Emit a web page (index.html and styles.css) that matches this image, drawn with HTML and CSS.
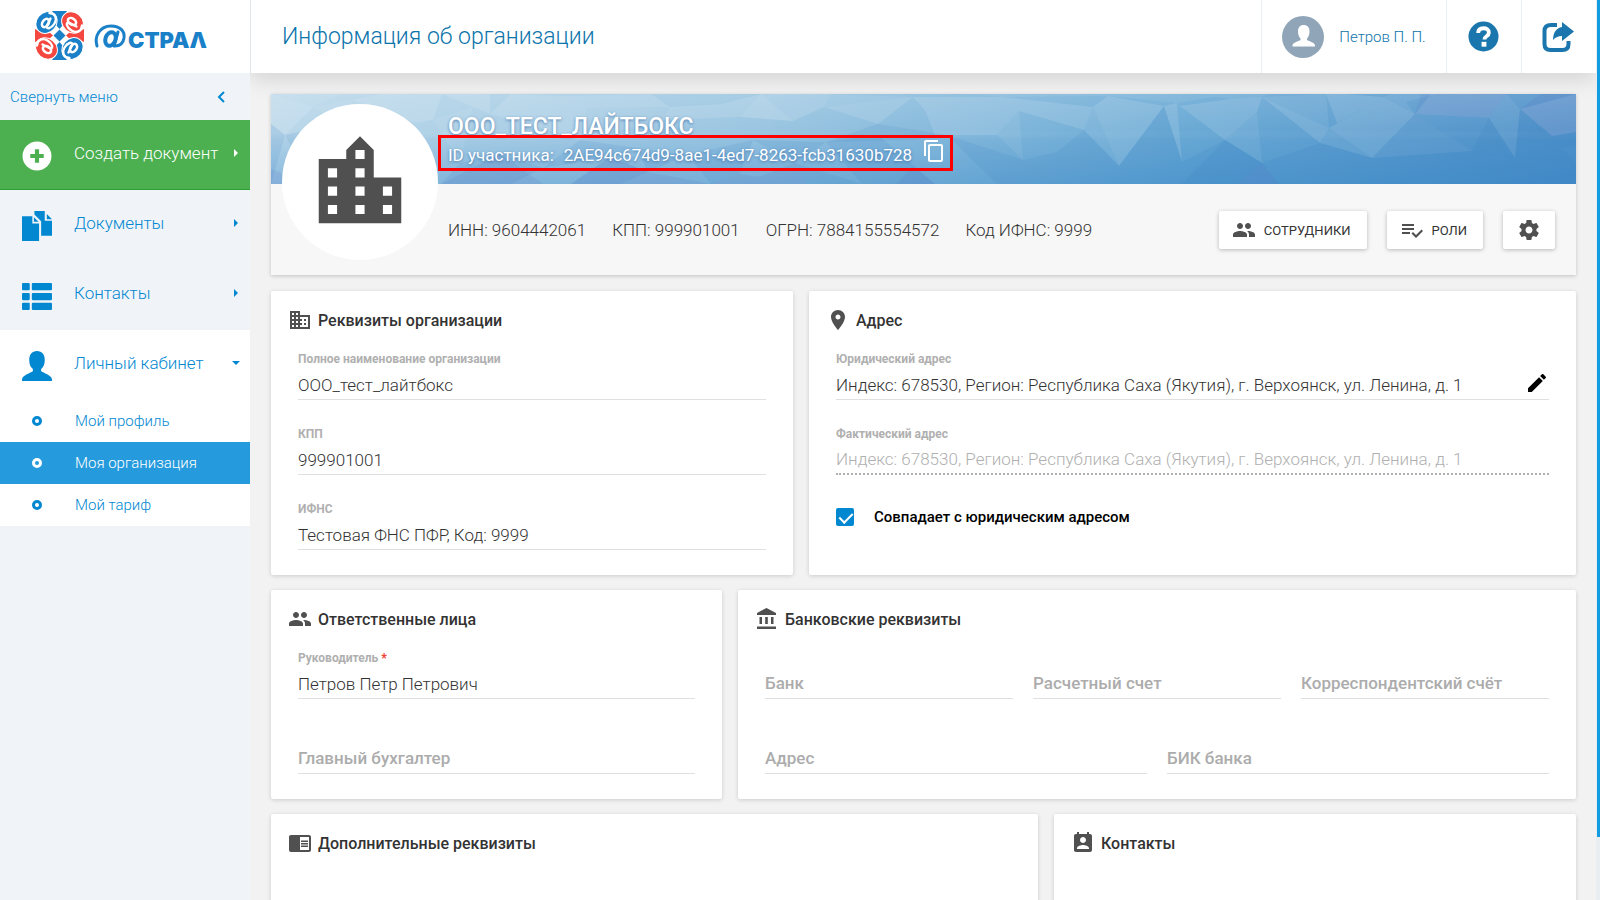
FILE: index.html
```html
<!DOCTYPE html>
<html lang="ru">
<head>
<meta charset="utf-8">
<title>Информация об организации</title>
<link rel="stylesheet" href="styles.css">
</head>
<body>
<div class="app">
  <aside class="sidebar">
    <a class="logo" href="#" aria-label="Астрал">
      <svg class="logo-svg" viewBox="0 0 180 52" role="img" aria-label="@СТРАЛ">
        <defs>
          <g id="swirl">
            <ellipse cx="11.500" cy="11.500" rx="10" ry="11.500" transform="rotate(40 11.500 11.500)"/>
            <ellipse cx="10.500" cy="12" rx="3" ry="4.500" transform="rotate(35 10.500 12)" fill="none" stroke="#fff" stroke-width="2.600"/>
            <path d="M15.500 7.500l-4 8c0 3 5 2 8-3s1-10-5-10.500" fill="none" stroke="#fff" stroke-width="2.400" stroke-linecap="round"/>
          </g>
        </defs>
        <g transform="translate(1 0)">
          <path fill="#1a80c8" d="M17 0h15l-4 6c-1 3-1 6 0 8l-3.500 4-3.500-4c1-3 1-6 0-8zM17 49h15l-4-6c-1-3-1-6 0-8l-3.500-4-3.500 4c1 3 1 6 0 8zM24.500 18.500l6 6-6 6-6-6z"/>
          <path fill="#f4473f" d="M0 18l6 3c3 1 6 1 8 0l4 3.500-4 3.500c-2-1-5-1-8 0l-6 3zM49 18l-6 3c-3 1-6 1-8 0l-4 3.500 4 3.500c2-1 5-1 8 0l6 3z"/>
          <g stroke="#fff" stroke-width="1">
            <use href="#swirl" fill="#1a80c8"/>
            <use href="#swirl" fill="#f4473f" transform="rotate(90 24.500 24.500)"/>
            <use href="#swirl" fill="#1a80c8" transform="rotate(180 24.500 24.500)"/>
            <use href="#swirl" fill="#f4473f" transform="rotate(270 24.500 24.500)"/>
          </g>
        </g>
        <path fill="none" stroke="#1a80c8" stroke-width="3" stroke-linecap="round" d="M63 35c-3-10 3-20 14-20 9 0 14 5 13 12-1 6-5 8-9 8M84 21l-4 14"/>
        <ellipse cx="76.500" cy="28" rx="5" ry="7" transform="rotate(20 76.500 28)" fill="none" stroke="#1a80c8" stroke-width="4"/>
        <text x="94" y="37" class="logo-text">СТРАΛ</text>
      </svg>
    </a>
    <button class="collapse" type="button"><span>Свернуть меню</span>
      <svg width="10" height="14" viewBox="0 0 10 14"><path d="M8 2L3 7l5 5" fill="none" stroke="#0288d1" stroke-width="2"/></svg>
    </button>
    <nav class="menu">
      <a class="item create" href="#">
        <svg class="ico" viewBox="0 0 29 29"><circle cx="14.500" cy="14.500" r="14" fill="#fff"/><path d="M12.500 8h4v4.500h4.500v4h-4.500v4.500h-4v-4.500H8v-4h4.500z" fill="#4caf50"/></svg>
        <span>Создать документ</span><i class="caret"></i>
      </a>
      <a class="item" href="#">
        <svg class="ico" viewBox="0 0 29 29" fill="#0288d1"><path d="M0 5h10v7h6.500v17H0zM11.500 6v4.500h4.500zM12 0h10v9.500h7V24H18.500V10L12 3.500zM24 3v5h5z"/></svg>
        <span>Документы</span><i class="caret"></i>
      </a>
      <a class="item" href="#">
        <svg class="ico" viewBox="0 0 29 29" fill="#0288d1"><rect y="2" width="7.500" height="7" rx="1"/><rect x="9.500" y="2" width="19.500" height="7" rx="1"/><rect y="11.500" width="7.500" height="7" rx="1"/><rect x="9.500" y="11.500" width="19.500" height="7" rx="1"/><rect y="21" width="7.500" height="7" rx="1"/><rect x="9.500" y="21" width="19.500" height="7" rx="1"/></svg>
        <span>Контакты</span><i class="caret"></i>
      </a>
      <div class="group">
        <a class="item" href="#">
          <svg class="ico" viewBox="0 0 29 29" fill="#0288d1"><path d="M14.500 0c5 0 7.500 3.500 7.500 8.500 0 4-1 7-3.500 9v2c3 2 10.500 4 10.500 8V29H0v-1.500c0-4 7.500-6 10.500-8v-2C8 15.500 7 12.500 7 8.500 7 3.500 9.500 0 14.500 0z"/></svg>
          <span>Личный кабинет</span><i class="caret down"></i>
        </a>
        <a class="sub" href="#"><i class="dot"></i>Мой профиль</a>
        <a class="sub active" href="#" aria-current="page"><i class="dot"></i>Моя организация</a>
        <a class="sub" href="#"><i class="dot"></i>Мой тариф</a>
      </div>
    </nav>
  </aside>

  <div class="page">
    <header class="topbar">
      <h1>Информация об организации</h1>
      <a class="user" href="#">
        <svg width="42" height="42" viewBox="0 0 42 42"><circle cx="21" cy="21" r="21" fill="#90a6b8"/><path fill="#fff" d="M21.500 9c4 0 6 2.500 6 6.500 0 3-1 5.500-2.500 7v1.500c2 1.500 8 2.500 8 5.500v1H10.500v-1c0-3 6-4 8-5.500v-1.500c-1.500-1.500-2.500-4-2.500-7 0-4 2-6.500 5.500-6.500z"/></svg>
        <span>Петров П. П.</span>
      </a>
      <button class="tool" type="button" aria-label="Помощь">
        <svg width="31" height="31" viewBox="0 0 32 32"><circle cx="16" cy="16" r="15.500" fill="#1a76ac"/><path d="M10.500 12.500c0-3.500 2.500-5 5.500-5s5.500 1.500 5.500 4.500c0 4-4.500 3.500-4.500 7" fill="none" stroke="#fff" stroke-width="4"/><rect x="14" y="21.500" width="5" height="5" fill="#fff"/></svg>
      </button>
      <button class="tool" type="button" aria-label="Выход">
        <svg width="32" height="32" viewBox="0 0 32 32"><path d="M15 4H9Q2.500 4 2.500 10v13q0 6 6 6h12q6 0 6-6v-3" fill="none" stroke="#1a76ac" stroke-width="4"/><path d="M20 1l12 9.500L20 20v-5c-4 0-6 1-9 4 0-7 3-12 9-13z" fill="#1a76ac"/></svg>
      </button>
    </header>

    <main class="content">
      <section class="hero">
        <svg class="banner" viewBox="0 0 1305 90" preserveAspectRatio="none" aria-hidden="true">
          <defs>
            <linearGradient id="across"><stop offset="0" stop-color="#bbd8ea"/><stop offset=".38" stop-color="#9ac5e1"/><stop offset=".7" stop-color="#6baad5"/><stop offset="1" stop-color="#4f91c9"/></linearGradient>
            <linearGradient id="down" x2="0" y2="1"><stop offset="0" stop-color="#fff" stop-opacity=".12"/><stop offset=".4" stop-color="#fff" stop-opacity="0"/><stop offset=".5" stop-color="#2a80c4" stop-opacity=".08"/><stop offset="1" stop-color="#2a80c4" stop-opacity=".34"/></linearGradient>
          </defs>
          <rect width="1305" height="90" fill="url(#across)"/>
          <rect width="1305" height="90" fill="url(#down)"/>
          <g fill="#fff" fill-opacity=".12">
            <path d="M0 0L42 13 14 41 0 30zM81 6L110 0H171L162 26 144 29zM202 13L171 0H219V20zM292 2L316 14 309 46 266 33zM240 0L292 2 266 33 219 20zM399 13L316 14 292 2 380 0zM451 10L399 13 392 26 469 23z"/>
            <path d="M469 23L451 10 490 0 546 0 553 13 522 27zM553 13L546 0H560zM553 13L642 3 607 30zM642 3L731 3 676 41zM651 9L676 41 664 41zM731 3L748 17 726 41 676 41zM748 17L813 36 822 13 731 3zM837 2L893 12 848 72 822 13z"/>
            <path d="M893 12L906 9 911 68zM906 9L954 46 909 12zM909 12L959 5 991 3 986 18 954 46zM991 3L1058 34 1049 49zM1055 0L1066 29 1112 3 1075 0zM1112 3L1144 20 1101 64 1058 34zM1144 20L1218 24 1235 0 1160 0zM1249 15L1305 0V38L1281 42z"/>
          </g>
          <g fill="#fff" fill-opacity=".07">
            <path d="M42 13L81 6 67 28zM0 0H70L42 13zM162 26L202 13 189 69zM316 14L399 13 392 26 309 46zM490 0L522 27 469 23zM560 0L642 3 553 13zM837 2L906 9 960 0 700 0 731 3zM959 5L991 3 1000 0H920zM991 3L1055 0 1058 34zM1235 0L1249 15 1218 24zM1144 20L1135 8 1165 0H1120L1112 3z"/>
            <path d="M748 17L752 66 726 41zM822 13L848 72 813 36zM954 46L986 18 991 69zM1049 49L1058 34 1101 64zM1218 24L1244 64 1249 15zM1101 64L1144 20 1201 57z"/>
          </g>
          <g fill="#2a75bd" fill-opacity=".11">
            <path d="M0 30L14 41 0 90zM14 41L67 28 40 90zM189 69L229 60 272 74 240 90H170zM309 46L366 54 339 63 272 74zM366 54L416 61 377 78zM339 63L377 78 350 90H300zM416 61L482 46 469 80 440 90zM482 46L555 48 524 69zM524 69L591 90H535zM555 48L607 41 664 90H591z"/>
            <path d="M607 30L676 41 642 46 555 48zM676 41L752 66 726 90zM752 66L786 58 758 90H726zM786 58L848 72 822 90H791zM786 58L791 90H758zM813 36L848 72 786 58zM848 72L869 77 858 90H822zM869 77L911 68 911 90H858zM893 12L911 68 869 77 848 72zM911 68L954 46 991 69 966 90H911z"/>
            <path d="M954 46L991 69 966 90H911zM991 69L1049 49 1101 64 1063 79zM991 69L1008 90H966zM991 69L1063 79 1074 90H1008zM1063 79L1101 64 1074 90zM1101 64L1159 71 1125 90H1074zM1144 20L1201 57 1159 71 1101 64zM1159 71L1177 90H1125zM1201 57L1213 90H1177L1159 71zM1201 57L1218 24 1244 64z"/>
            <path d="M1201 57L1244 64 1257 90H1213zM1244 64L1291 54 1257 90zM1249 15L1281 42 1244 64zM1291 54L1305 70V90H1257zM1281 42L1305 38V52L1291 54 1244 64z"/>
          </g>
          <g fill="#5a62ba" fill-opacity=".12">
            <path d="M0 75L40 90H0zM170 90L229 60 272 90zM300 90L339 63 377 78 440 90zM469 80L535 90H440zM524 69L535 90H469zM1144 20L1218 24 1235 0H1150zM1249 15L1270 0H1305V38L1281 42zM642 72L664 90H625zM991 69L1008 90H966z"/>
          </g>
        </svg>
        <div class="avatar">
          <svg width="110" height="110" viewBox="0 0 24 24" fill="#505050"><path d="M15 11V5l-3-3-3 3v2H3v14h18V11h-6zm-8 8H5v-2h2v2zm0-4H5v-2h2v2zm0-4H5V9h2v2zm6 8h-2v-2h2v2zm0-4h-2v-2h2v2zm0-4h-2V9h2v2zm0-4h-2V5h2v2zm6 12h-2v-2h2v2zm0-4h-2v-2h2v2z"/></svg>
        </div>
        <div class="hero-body">
          <div class="hero-top">
            <h2>ООО_ТЕСТ_ЛАЙТБОКС</h2>
            <div class="idbox"><span>ID участника:</span><span>2AE94c674d9-8ae1-4ed7-8263-fcb31630b728</span>
              <button type="button" class="copy" aria-label="Копировать"><svg width="24" height="24" viewBox="0 0 24 24" fill="#fff"><path d="M16 1H4c-1.100 0-2 .9-2 2v14h2V3h12V1zm3 4H8c-1.100 0-2 .9-2 2v14c0 1.100.9 2 2 2h11c1.100 0 2-.9 2-2V7c0-1.100-.9-2-2-2zm0 16H8V7h11v14z"/></svg></button>
            </div>
          </div>
          <div class="hero-info">
            <span>ИНН: 9604442061</span><span>КПП: 999901001</span><span>ОГРН: 7884155554572</span><span>Код ИФНС: 9999</span>
            <div class="actions">
              <button type="button" class="btn"><svg width="24" height="24" viewBox="0 0 24 24"><path d="M16 11c1.660 0 2.990-1.340 2.990-3S17.660 5 16 5c-1.660 0-3 1.340-3 3s1.340 3 3 3zm-8 0c1.660 0 2.990-1.340 2.990-3S9.660 5 8 5C6.340 5 5 6.340 5 8s1.340 3 3 3zm0 2c-2.330 0-7 1.170-7 3.500V19h14v-2.500c0-2.330-4.670-3.500-7-3.500zm8 0c-.29 0-.62.02-.97.05 1.160.84 1.970 1.970 1.970 3.450V19h6v-2.500c0-2.330-4.670-3.500-7-3.500z"/></svg>СОТРУДНИКИ</button>
              <button type="button" class="btn"><svg width="24" height="24" viewBox="0 0 24 24"><path d="M14 10H2v2h12v-2zm0-4H2v2h12V6zM2 16h8v-2H2v2zm19.500-4.500L23 13l-6.990 7-4.510-4.500L13 14l3.010 3 5.490-5.500z"/></svg>РОЛИ</button>
              <button type="button" class="btn gear" aria-label="Настройки"><svg width="24" height="24" viewBox="0 0 24 24"><path d="M19.430 12.980c.04-.32.07-.64.07-.98s-.03-.66-.07-.98l2.110-1.650c.19-.15.24-.42.12-.64l-2-3.460c-.12-.22-.39-.3-.61-.22l-2.490 1c-.52-.4-1.080-.73-1.690-.98l-.38-2.650C14.460 2.180 14.250 2 14 2h-4c-.25 0-.46.18-.49.42l-.38 2.650c-.61.25-1.170.59-1.690.98l-2.490-1c-.23-.09-.49 0-.61.22l-2 3.460c-.13.22-.07.49.12.64l2.110 1.650c-.04.32-.07.65-.07.98s.03.66.07.98l-2.110 1.650c-.19.15-.24.42-.12.64l2 3.460c.12.22.39.3.61.22l2.490-1c.52.4 1.080.73 1.690.98l.38 2.650c.03.24.24.42.49.42h4c.25 0 .46-.18.49-.42l.38-2.650c.61-.25 1.170-.59 1.690-.98l2.490 1c.23.09.49 0 .61-.22l2-3.460c.12-.22.07-.49-.12-.64l-2.110-1.650zM12 15.500c-1.930 0-3.500-1.570-3.500-3.500s1.570-3.500 3.500-3.500 3.500 1.570 3.500 3.500-1.570 3.500-3.500 3.500z"/></svg></button>
            </div>
          </div>
        </div>
      </section>

      <div class="row row-a">
        <section class="card">
          <h3><svg width="24" height="24" viewBox="0 0 24 24"><path d="M12 7V3H2v18h20V7H12zM6 19H4v-2h2v2zm0-4H4v-2h2v2zm0-4H4V9h2v2zm0-4H4V5h2v2zm4 12H8v-2h2v2zm0-4H8v-2h2v2zm0-4H8V9h2v2zm0-4H8V5h2v2zm10 12h-8v-2h2v-2h-2v-2h2v-2h-2V9h8v10zm-2-8h-2v2h2v-2zm0 4h-2v2h2v-2z"/></svg>Реквизиты организации</h3>
          <div class="fields">
            <div class="field"><label for="full">Полное наименование организации</label><input id="full" value="ООО_тест_лайтбокс"></div>
            <div class="field"><label for="kpp">КПП</label><input id="kpp" value="999901001"></div>
            <div class="field"><label for="ifns">ИФНС</label><input id="ifns" value="Тестовая ФНС ПФР, Код: 9999"></div>
          </div>
        </section>
        <section class="card">
          <h3><svg width="24" height="24" viewBox="0 0 24 24"><path d="M12 2C8.130 2 5 5.130 5 9c0 5.250 7 13 7 13s7-7.750 7-13c0-3.870-3.130-7-7-7zm0 9.500c-1.380 0-2.500-1.120-2.500-2.500s1.120-2.500 2.500-2.500 2.500 1.120 2.500 2.500-1.120 2.500-2.500 2.500z"/></svg>Адрес</h3>
          <div class="fields">
            <div class="field"><label for="legal">Юридический адрес</label>
              <div class="with-edit"><input id="legal" value="Индекс: 678530, Регион: Республика Саха (Якутия), г. Верхоянск, ул. Ленина, д. 1"><button type="button" class="edit" aria-label="Изменить"><svg width="24" height="24" viewBox="0 0 24 24"><path d="M3 17.250V21h3.750L17.810 9.940l-3.750-3.750L3 17.250zM20.710 7.040c.39-.39.39-1.020 0-1.410l-2.340-2.340c-.39-.39-1.020-.39-1.410 0l-1.830 1.830 3.750 3.750 1.830-1.830z"/></svg></button></div></div>
            <div class="field"><label for="fact">Фактический адрес</label><input id="fact" disabled value="Индекс: 678530, Регион: Республика Саха (Якутия), г. Верхоянск, ул. Ленина, д. 1"></div>
            <label class="check"><input type="checkbox" checked><span>Совпадает с юридическим адресом</span></label>
          </div>
        </section>
      </div>

      <div class="row row-b">
        <section class="card">
          <h3><svg width="24" height="24" viewBox="0 0 24 24"><path d="M16 11c1.660 0 2.990-1.340 2.990-3S17.660 5 16 5c-1.660 0-3 1.340-3 3s1.340 3 3 3zm-8 0c1.660 0 2.990-1.340 2.990-3S9.660 5 8 5C6.340 5 5 6.340 5 8s1.340 3 3 3zm0 2c-2.330 0-7 1.170-7 3.500V19h14v-2.500c0-2.330-4.670-3.500-7-3.500zm8 0c-.29 0-.62.02-.97.05 1.160.84 1.970 1.970 1.970 3.450V19h6v-2.500c0-2.330-4.670-3.500-7-3.500z"/></svg>Ответственные лица</h3>
          <div class="fields">
            <div class="field"><label for="head">Руководитель <b>*</b></label><input id="head" value="Петров Петр Петрович"></div>
            <div class="field empty"><input aria-label="Главный бухгалтер" placeholder="Главный бухгалтер"></div>
          </div>
        </section>
        <section class="card">
          <h3><svg width="24" height="24" viewBox="0 0 24 24"><path d="M4.500 10v7H7v-7H4.500zm5.700 0v7h2.600v-7h-2.600zM2 22h19v-2.500H2V22zm14-12v7h2.500v-7H16zm-4.500-9L2 6v2h19V6l-9.500-5z"/></svg>Банковские реквизиты</h3>
          <div class="fields">
            <div class="line">
              <div class="field empty"><input aria-label="Банк" placeholder="Банк"></div>
              <div class="field empty"><input aria-label="Расчетный счет" placeholder="Расчетный счет"></div>
              <div class="field empty"><input aria-label="Корреспондентский счёт" placeholder="Корреспондентский счёт"></div>
            </div>
            <div class="line">
              <div class="field empty"><input aria-label="Адрес" placeholder="Адрес"></div>
              <div class="field empty"><input aria-label="БИК банка" placeholder="БИК банка"></div>
            </div>
          </div>
        </section>
      </div>

      <div class="row row-c">
        <section class="card tall">
          <h3><svg width="24" height="24" viewBox="0 0 24 24"><path d="M13 12h7v1.500h-7zm0-2.500h7V11h-7zm0 5h7V16h-7zM21 4H3c-1.100 0-2 .9-2 2v13c0 1.100.9 2 2 2h18c1.100 0 2-.9 2-2V6c0-1.100-.9-2-2-2zm0 15h-9V6h9v13z"/></svg>Дополнительные реквизиты</h3>
        </section>
        <section class="card tall">
          <h3><svg width="24" height="24" viewBox="0 0 24 24"><path d="M19 3h-1V1h-2v2H8V1H6v2H5c-1.110 0-2 .9-2 2v14c0 1.100.89 2 2 2h14c1.100 0 2-.9 2-2V5c0-1.100-.9-2-2-2zm-7 3c1.660 0 3 1.340 3 3s-1.340 3-3 3-3-1.340-3-3 1.340-3 3-3zm6 12H6v-1c0-2 4-3.100 6-3.100s6 1.100 6 3.100v1z"/></svg>Контакты</h3>
        </section>
      </div>
    </main>
  </div>
  <div class="track"><div class="thumb"></div></div>
</div>
</body>
</html>
```
FILE: styles.css
```css
* { box-sizing: border-box; }
body { margin: 0; font-family: Roboto, "Noto Sans", sans-serif; font-size: 17px; font-weight: 300; color: #333; background: #f2f2f2; }
button { font: inherit; border: 0; background: none; padding: 0; color: inherit; }
a { color: inherit; text-decoration: none; }
h1, h2, h3 { margin: 0; }
svg { display: block; flex: none; }

.app { display: flex; height: 100vh; overflow: hidden; }
.sidebar { flex: 0 0 250px; background: #f0f4f8; color: #0288d1; }
.logo { display: flex; align-items: center; height: 73px; padding: 0 34px; background: #fff; }
.logo-svg { width: 180px; height: 52px; }
.logo-text { font: 900 22px Inter, sans-serif; fill: #1a80c8; }
.collapse { display: flex; align-items: center; justify-content: space-between; width: 100%; height: 47px; padding: 0 24px 0 10px; font-size: 15px; }
.item { display: flex; align-items: center; height: 70px; padding: 0 10px 0 22px; }
.item span { flex: 1; padding-bottom: 4px; }
.ico { width: 30px; height: 30px; margin: 2px 22px 0 0; }
.create { background: #4caf50; color: #fff; border-bottom: 1px solid #2fa035; }
.caret { border: 4px solid transparent; border-left-color: currentColor; border-right: 0; margin: 0 2px 4px 0; }
.caret.down { border: 4px solid transparent; border-top-color: currentColor; border-bottom: 0; margin-right: 0; }
.group { background: #fff; }
.sub { display: flex; align-items: center; height: 42px; padding-left: 32px; font-size: 15px; }
.dot { width: 10px; height: 10px; margin-right: 33px; border: 3px solid #0288d1; border-radius: 50%; }
.active { background: #259adc; color: #fff; }
.active .dot { border-color: #fff; }

.page { flex: 1; min-width: 0; display: flex; flex-direction: column; }
.topbar { position: relative; display: flex; flex: 0 0 73px; background: #fff; border-left: 1px solid #e0e6ea; box-shadow: 0 4px 22px rgba(0,0,0,.15); clip-path: inset(0 0 -40px 0); color: #0b74ab; }
h1 { flex: 1; align-self: center; padding-left: 31px; font-size: 23px; font-weight: 300; }
.user, .tool { display: flex; align-items: center; justify-content: center; border-left: 1px solid #e8eef3; }
.user { width: 185px; gap: 15px; font-size: 15px; }
.tool { width: 75px; padding-right: 2px; }

.content { flex: 1; min-height: 0; overflow: hidden; padding: 21px 20px 0 21px; }
.hero { position: relative; display: flex; margin-bottom: 16px; background: #f7f7f7; box-shadow: 0 1px 4px rgba(0,0,0,.2); }
.banner { position: absolute; top: 0; left: 0; width: 100%; height: 90px; }
.avatar { position: relative; display: flex; align-items: center; justify-content: center; flex: 0 0 156px; height: 156px; margin: 10px 10px 14px 11px; border-radius: 50%; background: #fff; }
.hero-body { position: relative; flex: 1; }
.hero-top { height: 90px; padding-top: 20px; color: #fff; text-shadow: 0 1px 3px rgba(40,90,150,.7); }
h2 { font-size: 23px; line-height: 26px; font-weight: 500; }
.idbox { position: absolute; top: 41px; left: -10px; display: flex; align-items: center; gap: 10px; height: 36px; padding: 4px 4px 0 7px; border: 3px solid #f00; font-weight: 400; }
.copy { padding-bottom: 8px; }
.hero-info { display: flex; align-items: center; gap: 26px; height: 91px; padding: 1px 21px 0 0; }
.actions { display: flex; gap: 20px; margin-left: auto; }
.btn { display: flex; align-items: center; gap: 8px; height: 38px; padding: 0 16px 0 13px; border-radius: 2px; background: #fff; box-shadow: 0 1px 4px rgba(0,0,0,.26); font-size: 13px; font-weight: 400; fill: #505050; }
.gear { padding: 0 14px; }

.row { display: grid; gap: 16px; margin-bottom: 15px; }
.row-a { grid-template-columns: 522fr 767fr; }
.row-b { grid-template-columns: 451fr 838fr; }
.row-c { grid-template-columns: 767fr 522fr; }
.card { min-width: 0; padding: 16px 27px 25px; border-radius: 2px; background: #fff; box-shadow: 0 1px 4px rgba(0,0,0,.16); }
.tall { min-height: 180px; }
h3 { display: flex; align-items: center; gap: 6px; height: 26px; margin-left: -10px; font-size: 16px; font-weight: 500; fill: #505050; }
.fields { display: grid; gap: 25px; margin-top: 17px; }
.field { display: grid; min-width: 0; }
.field label { font-size: 12px; line-height: 18px; font-weight: 700; color: #b0b0b0; }
.field b { color: #f44336; }
.field input { width: 100%; height: 32px; padding: 2px 0 0; border: 0; border-bottom: 1px solid #e0e0e0; background: none; font: inherit; color: inherit; outline: 0; }
.field input::placeholder { color: #acacac; font-weight: 500; opacity: 1; }
.field input:disabled { border-bottom: 2px dotted #b0b0b0; color: #b0b0b0; }
.empty { padding-top: 18px; }
.empty input { padding: 0; }
.with-edit { position: relative; }
.edit { position: absolute; right: 0; bottom: 5px; }
.line { display: grid; grid-auto-flow: column; grid-auto-columns: 1fr; gap: 20px; }
.check { display: flex; align-items: center; gap: 20px; height: 34px; font-size: 15px; font-weight: 500; color: #000; }
.check input { position: relative; appearance: none; width: 18px; height: 18px; margin: 0; border-radius: 2px; background: #0288d1; }
.check input:checked::after { content: ""; position: absolute; left: 6px; top: 2px; width: 6px; height: 11px; border: solid #fff; border-width: 0 2px 2px 0; transform: rotate(45deg); }
.track { flex: 0 0 4px; background: #e8edf1; }
.thumb { height: 93%; margin-left: 1px; background: #129de0; }
```
